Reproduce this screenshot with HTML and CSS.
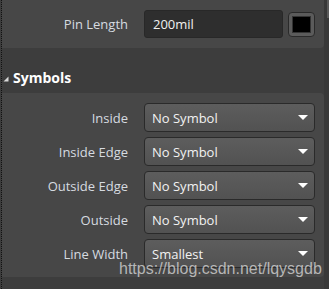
FILE: index.html
```html
<!DOCTYPE html>
<html lang="en">
<head>
    <meta charset="UTF-8">
    <title>Pin Properties</title>
    <link rel="stylesheet" href="styles.css">
</head>
<body>
    <div class="page">
        <div class="content">
            <div class="panel panel-top">
                <div class="row">
                    <label class="label">Pin Length</label>
                    <div class="field-pair">
                        <div class="text-input">200mil</div>
                        <div class="swatch"><div class="swatch-inner"></div></div>
                    </div>
                </div>
            </div>

            <div class="section-head">
                <svg class="twisty" width="6" height="6" viewBox="0 0 6 6"><polygon points="5.5,0.5 5.5,5.5 0.5,5.5" fill="#d8d8d8"/></svg>
                <span>Symbols</span>
            </div>

            <div class="panel panel-symbols">
                <div class="row">
                    <label class="label">Inside</label>
                    <div class="select">No Symbol<svg class="caret" width="10" height="5" viewBox="0 0 10 5"><polygon points="0,0 10,0 5,5" fill="#fff"/></svg></div>
                </div>
                <div class="row">
                    <label class="label">Inside Edge</label>
                    <div class="select">No Symbol<svg class="caret" width="10" height="5" viewBox="0 0 10 5"><polygon points="0,0 10,0 5,5" fill="#fff"/></svg></div>
                </div>
                <div class="row">
                    <label class="label">Outside Edge</label>
                    <div class="select">No Symbol<svg class="caret" width="10" height="5" viewBox="0 0 10 5"><polygon points="0,0 10,0 5,5" fill="#fff"/></svg></div>
                </div>
                <div class="row">
                    <label class="label">Outside</label>
                    <div class="select">No Symbol<svg class="caret" width="10" height="5" viewBox="0 0 10 5"><polygon points="0,0 10,0 5,5" fill="#fff"/></svg></div>
                </div>
                <div class="row">
                    <label class="label">Line Width</label>
                    <div class="select">Smallest<svg class="caret" width="10" height="5" viewBox="0 0 10 5"><polygon points="0,0 10,0 5,5" fill="#fff"/></svg></div>
                </div>
            </div>
        </div>
        <div class="scroll-track"><div class="scroll-thumb"></div></div>
        <div class="watermark">https://blog.csdn.net/lqysgdb</div>
    </div>
</body>
</html>
```

FILE: styles.css
```css
body, html {
    margin: 0;
    padding: 0;
    background-color: #3d3d3d;
    font-family: "Open Sans", "Noto Sans", sans-serif;
    font-size: 13px;
    color: #dcdcdc;
}
.page {
    position: relative;
    display: flex;
    width: 328px;
    height: 289px;
    margin-left: 1px;
    border-left: 1px dotted #111;
    overflow: hidden;
}
.content {
    flex: 1;
}
.scroll-track {
    width: 6px;
    background-color: #383838;
    display: flex;
    justify-content: flex-end;
}
.scroll-thumb {
    width: 3px;
    height: 18px;
    background-color: #5a5a5a;
}
.panel {
    background-color: #474747;
    padding: 10px 6px 10px 0;
    border-radius: 0 0 4px 0;
    display: flex;
    flex-direction: column;
    gap: 5px;
}
.panel-symbols {
    border-radius: 0 4px 4px 0;
    padding-bottom: 9px;
}
.row {
    display: grid;
    grid-template-columns: 126px 171px;
    column-gap: 16px;
    align-items: center;
}
.label {
    text-align: right;
    white-space: nowrap;
    color: #d6dbe0;
}
.field-pair {
    display: flex;
    gap: 5px;
    align-items: center;
}
.text-input {
    width: 131px;
    height: 26px;
    line-height: 26px;
    padding-left: 8px;
    background-color: #2e2e2e;
    border: 1px solid #282828;
    border-radius: 3px;
    color: #f0f0f0;
}
.swatch {
    width: 25px;
    height: 23px;
    border: 1px solid #2a2a2a;
    border-radius: 4px;
    background-color: #5b5b5b;
    display: flex;
    justify-content: center;
    align-items: center;
}
.swatch-inner {
    width: 17px;
    height: 15px;
    background-color: #000;
    border: 1px solid #333;
}
.select {
    height: 27px;
    padding: 0 6px 0 7px;
    display: flex;
    align-items: center;
    justify-content: space-between;
    background: linear-gradient(#5d5d5d, #525252);
    border: 1px solid #2a2a2a;
    border-radius: 4px;
    color: #f2f2f2;
}
.section-head {
    height: 45px;
    box-sizing: border-box;
    padding: 14px 0 0 1px;
    display: flex;
    align-items: center;
    gap: 4px;
    font-weight: bold;
    font-size: 14px;
    color: #ffffff;
}
.twisty {
    margin-top: 2px;
}
.watermark {
    position: absolute;
    left: 117px;
    top: 260px;
    font-family: "Liberation Sans", Arial, sans-serif;
    font-size: 16px;
    color: rgba(220, 220, 220, 0.75);
    white-space: nowrap;
}
```
